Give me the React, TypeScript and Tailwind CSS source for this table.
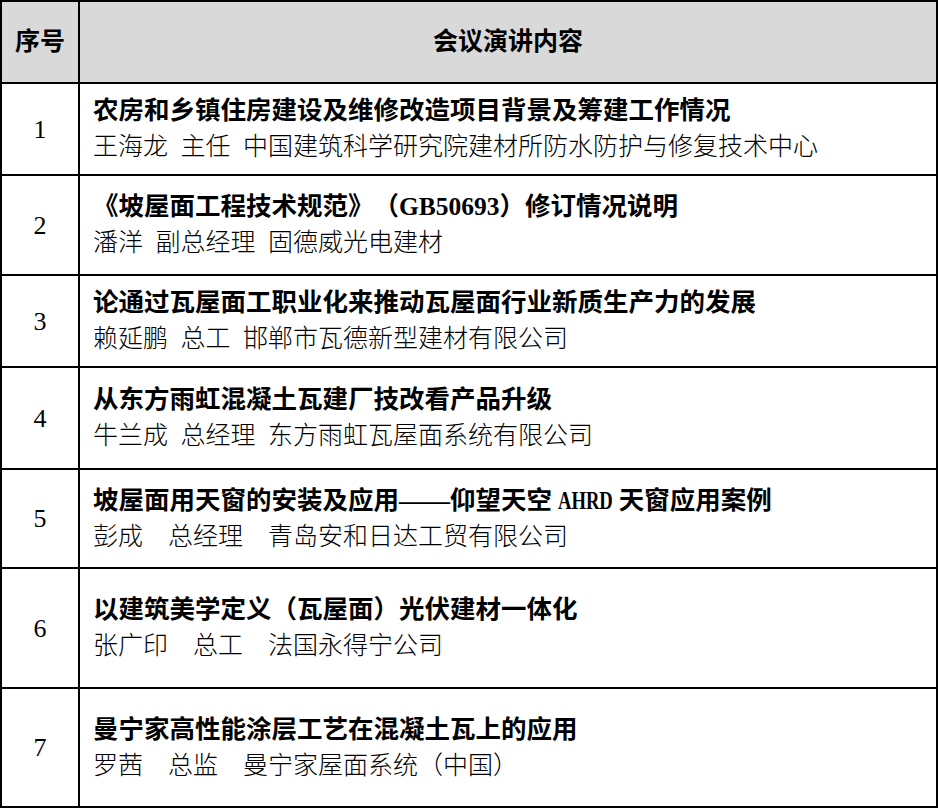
import React from 'react';

type Talk = {
  no: number;
  title: React.ReactNode;
  speaker: string;
  height: string;
};

// half-width gaps are en spaces so they keep the width of the original page
const talks: Talk[] = [
  {
    no: 1,
    title: '农房和乡镇住房建设及维修改造项目背景及筹建工作情况',
    speaker: '王海龙\u2002主任\u2002中国建筑科学研究院建材所防水防护与修复技术中心',
    height: 'h-[92px]',
  },
  {
    no: 2,
    title: '《坡屋面工程技术规范》（GB50693）修订情况说明',
    speaker: '潘洋\u2002副总经理\u2002固德威光电建材',
    height: 'h-[100px]',
  },
  {
    no: 3,
    title: '论通过瓦屋面工职业化来推动瓦屋面行业新质生产力的发展',
    speaker: '赖延鹏\u2002总工\u2002邯郸市瓦德新型建材有限公司',
    height: 'h-[92px]',
  },
  {
    no: 4,
    title: '从东方雨虹混凝土瓦建厂技改看产品升级',
    speaker: '牛兰成\u2002总经理\u2002东方雨虹瓦屋面系统有限公司',
    height: 'h-[102px]',
  },
  {
    no: 5,
    title: (
      <>
        坡屋面用天窗的安装及应用——仰望天空{' '}
        {/* narrow latin, like the half-width face of the source document */}
        <span className="inline-block w-[54px] align-baseline">
          <span className="inline-block origin-left scale-x-[0.73]">AHRD</span>
        </span>{' '}
        天窗应用案例
      </>
    ),
    speaker: '彭成　总经理　青岛安和日达工贸有限公司',
    height: 'h-[99px]',
  },
  {
    no: 6,
    title: '以建筑美学定义（瓦屋面）光伏建材一体化',
    speaker: '张广印　总工　法国永得宁公司',
    height: 'h-[120px]',
  },
  {
    no: 7,
    title: '曼宁家高性能涂层工艺在混凝土瓦上的应用',
    speaker: '罗茜　总监　曼宁家屋面系统（中国）',
    height: 'h-[119px]',
  },
];

const App: React.FC = () => {
  return (
    <div className="w-[938px] h-[808px] bg-white font-['Liberation_Serif','Noto_Sans_CJK_SC',serif] text-black [text-spacing-trim:space-all]">
      <table className="w-[938px] border-collapse table-fixed">
        <colgroup>
          <col className="w-[78px]" />
          <col />
        </colgroup>
        <thead>
          <tr className="h-[82px] bg-[#d9d9d9]">
            <th className="border-2 border-black text-[25px] font-bold text-center">序号</th>
            <th className="border-2 border-black text-[25px] font-bold text-center">会议演讲内容</th>
          </tr>
        </thead>
        <tbody>
          {talks.map((talk) => (
            <tr key={talk.no} className={talk.height}>
              <td className="border-2 border-black text-center align-middle text-[26px]">{talk.no}</td>
              <td className="border-2 border-black align-middle pl-[13px] leading-[36px] whitespace-nowrap">
                <div className="font-bold text-[25.5px]">{talk.title}</div>
                <div className="font-light text-[25px]">{talk.speaker}</div>
              </td>
            </tr>
          ))}
        </tbody>
      </table>
    </div>
  );
};

export default App;
